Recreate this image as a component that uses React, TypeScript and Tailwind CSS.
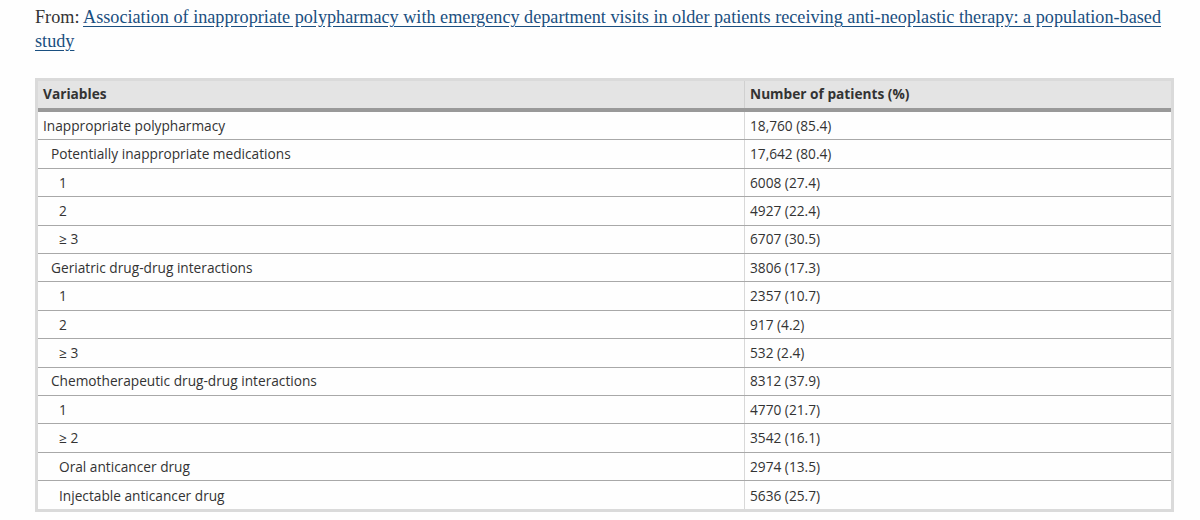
import React from "react";

const rows: { label: string; value: string; level: number }[] = [
  { label: "Inappropriate polypharmacy", value: "18,760 (85.4)", level: 0 },
  { label: "Potentially inappropriate medications", value: "17,642 (80.4)", level: 1 },
  { label: "1", value: "6008 (27.4)", level: 2 },
  { label: "2", value: "4927 (22.4)", level: 2 },
  { label: "≥ 3", value: "6707 (30.5)", level: 2 },
  { label: "Geriatric drug-drug interactions", value: "3806 (17.3)", level: 1 },
  { label: "1", value: "2357 (10.7)", level: 2 },
  { label: "2", value: "917 (4.2)", level: 2 },
  { label: "≥ 3", value: "532 (2.4)", level: 2 },
  { label: "Chemotherapeutic drug-drug interactions", value: "8312 (37.9)", level: 1 },
  { label: "1", value: "4770 (21.7)", level: 2 },
  { label: "≥ 2", value: "3542 (16.1)", level: 2 },
  { label: "Oral anticancer drug", value: "2974 (13.5)", level: 2 },
  { label: "Injectable anticancer drug", value: "5636 (25.7)", level: 2 },
];

export default function App() {
  return (
    <div className="w-[1200px] h-[520px] bg-[#fefefe] overflow-hidden">
      <div className="w-[1172px] pl-[35px] pt-[5px] text-[18.2px] leading-[24px] text-[#333] font-['Liberation_Serif',serif]">
        From:{" "}
        <a className="text-[#1a4f80] underline underline-offset-[3px] decoration-[#1a4f80]">
          Association of inappropriate polypharmacy with emergency department visits in older patients receiving anti-neoplastic therapy: a population-based study
        </a>
      </div>
      <div className="mt-[25px] ml-[35px] w-[1139px] border-[3px] border-[#dadada] font-['Open_Sans',sans-serif] text-[13.7px] text-[#333]">
        <div className="flex h-[31px] bg-[#e4e4e4] border-b-[4px] border-[#999] font-bold">
          <div className="w-[706px] flex items-center pl-[5px]">Variables</div>
          <div className="flex-1 flex items-center pl-[5px] border-l border-[#d0d0d0]">Number of patients (%)</div>
        </div>
        {rows.map((r, i) => (
          <div
            key={i}
            className={`flex h-[28.4px] ${i < rows.length - 1 ? "border-b border-[#a8a8a8]" : ""}`}
          >
            <div
              className={`w-[706px] flex items-center pt-[1px] ${
                r.level === 0 ? "pl-[5px]" : r.level === 1 ? "pl-[13px]" : "pl-[21px]"
              }`}
            >
              {r.label}
            </div>
            <div className="flex-1 flex items-center pt-[1px] pl-[5px] border-l border-[#d8d8d8]">{r.value}</div>
          </div>
        ))}
      </div>
    </div>
  );
}
